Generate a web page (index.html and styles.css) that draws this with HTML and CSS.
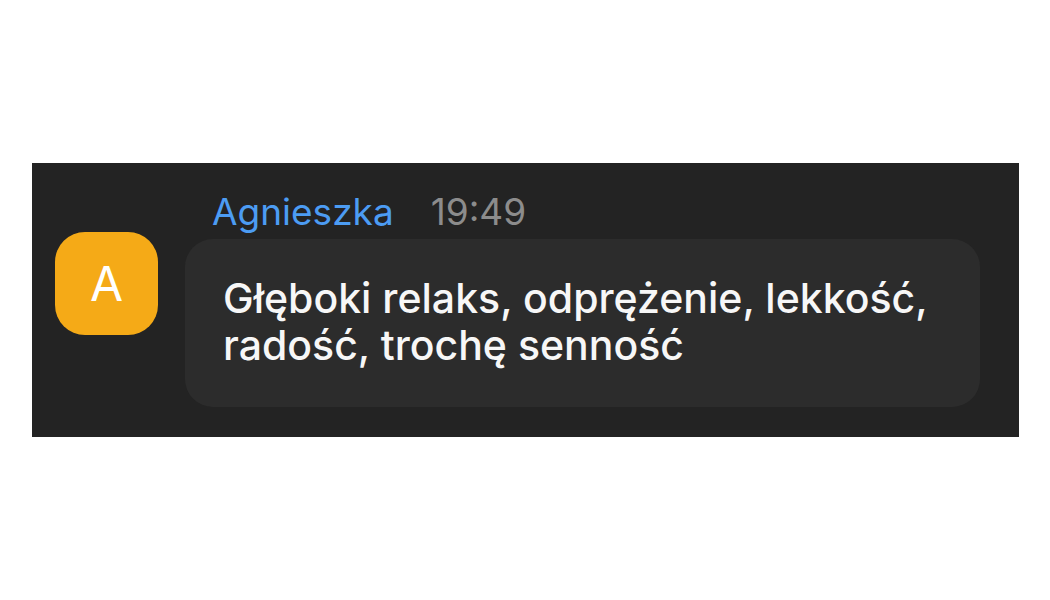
FILE: index.html
```html
<!DOCTYPE html>
<html lang="pl">
<head>
    <meta charset="UTF-8">
    <meta name="viewport" content="width=device-width, initial-scale=1.0">
    <title>Wiadomość</title>
    <link rel="stylesheet" href="styles.css">
</head>
<body>
    <div class="chat">
        <div class="avatar">A</div>
        <div class="message">
            <div class="message-header">
                <span class="author">Agnieszka</span>
                <span class="time">19:49</span>
            </div>
            <div class="bubble">
                Głęboki relaks, odprężenie, lekkość, radość, trochę senność
            </div>
        </div>
    </div>
</body>
</html>
```

FILE: styles.css
```css
body {
    margin: 0;
    padding: 163px 31px 0 32px;
    background-color: #ffffff;
    font-family: Inter, "Liberation Sans", Arial, sans-serif;
}
.chat {
    display: flex;
    align-items: flex-start;
    gap: 27px;
    height: 274px;
    box-sizing: border-box;
    padding: 27px 39px 30px 23px;
    background-color: #232323;
}
.avatar {
    flex: none;
    width: 103px;
    height: 103px;
    margin-top: 42px;
    border-radius: 30px;
    background-color: #f5aa17;
    color: #ffffff;
    font-size: 48px;
    line-height: 103px;
    text-align: center;
}
.message {
    flex: 1;
}
.message-header {
    display: flex;
    gap: 37px;
    padding-left: 27px;
    font-size: 37px;
    line-height: 44px;
}
.author {
    color: #4c9cf3;
}
.time {
    color: #8c8c8c;
}
.bubble {
    margin-top: 5px;
    padding: 36px 37px 38px 38px;
    border-radius: 28px;
    background-color: #2c2c2c;
    color: #f7f7f7;
    font-size: 41px;
    font-weight: 500;
    line-height: 47px;
}
```
